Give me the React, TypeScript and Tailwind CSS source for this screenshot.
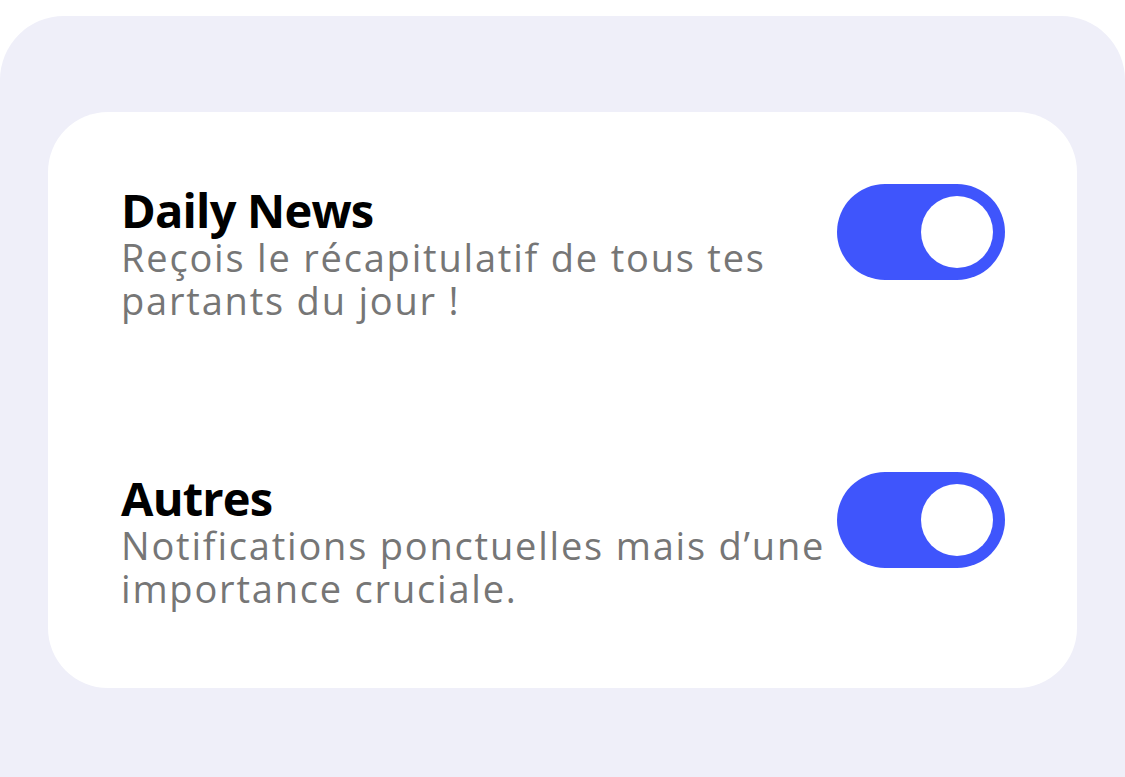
import { useState } from 'react';

type Pref = {
  id: string;
  title: string;
  lines: string[];
};

const prefs: Pref[] = [
  { id: 'daily', title: 'Daily News', lines: ['Reçois le récapitulatif de tous tes', 'partants du jour !'] },
  { id: 'other', title: 'Autres', lines: ['Notifications ponctuelles mais d’une', 'importance cruciale.'] },
];

function Toggle({ on, onChange }: { on: boolean; onChange: () => void }) {
  return (
    <button
      type="button"
      onClick={onChange}
      className={`shrink-0 w-[168px] h-[96px] rounded-full p-[12px] flex items-center border-0 cursor-pointer ${
        on ? 'bg-[#3f55fc] justify-end' : 'bg-[#d9d9e3] justify-start'
      }`}
    >
      <span className="block w-[72px] h-[72px] rounded-full bg-white" />
    </button>
  );
}

export default function App() {
  const [state, setState] = useState<Record<string, boolean>>({ daily: true, other: true });

  return (
    <div className="min-h-[777px] bg-white pt-[16px]" style={{ fontFamily: '"Open Sans", "Noto Sans", sans-serif' }}>
      <div className="h-[761px] bg-[#efeff9] rounded-t-[64px] px-[48px] pt-[96px]">
        <section className="bg-white rounded-[60px] h-[576px] pl-[73px] pr-[72px] pt-[72px]">
          {prefs.map((p, i) => (
            <div key={p.id} className={`flex items-start justify-between ${i === 0 ? 'h-[288px]' : ''}`}>
              <div className="whitespace-nowrap">
                <h2 className="m-0 text-[47px] leading-[52px] font-bold text-black tracking-[-0.8px]">{p.title}</h2>
                <p className="m-0 text-[38px] leading-[43px] text-[#767676] tracking-[1.8px]">
                  {p.lines[0]}
                  <br />
                  {p.lines[1]}
                </p>
              </div>
              <Toggle on={state[p.id]} onChange={() => setState((s) => ({ ...s, [p.id]: !s[p.id] }))} />
            </div>
          ))}
        </section>
      </div>
    </div>
  );
}
